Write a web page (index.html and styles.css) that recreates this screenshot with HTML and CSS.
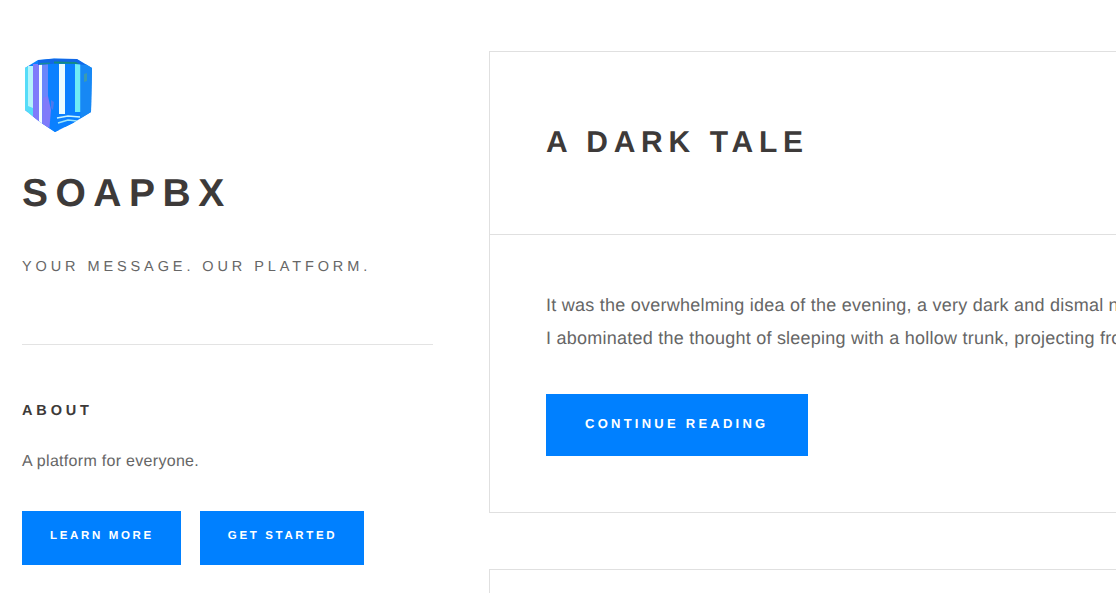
FILE: index.html
```html
<!DOCTYPE html>
<html>
<head>
    <title>Soapbx</title>
    <link rel="stylesheet" href="styles.css">
</head>
<body>
    <div class="page">
        <aside class="sidebar">
            <svg class="logo" width="68" height="75" viewBox="0 0 68 75">
                <defs>
                    <clipPath id="cube">
                        <path d="M1 10 L14 2 L30 .5 L53 1 L68 10 L67 54 L49 65 L31 74 L16 64 L1 52 Z"/>
                    </clipPath>
                </defs>
                <g clip-path="url(#cube)">
                    <rect width="68" height="75" fill="#0a80ff"/>
                    <rect x="0" y="8" width="4" height="67" fill="#55dcf8"/>
                    <rect x="4" y="8" width="5" height="67" fill="#b5f4fb"/>
                    <rect x="9" y="6" width="6" height="69" fill="#7f7bfa"/>
                    <rect x="15" y="6" width="3" height="62" fill="#f2fdff"/>
                    <rect x="18" y="5" width="6" height="70" fill="#6a86fb"/>
                    <rect x="24" y="5" width="11" height="70" fill="#0a80ff"/>
                    <rect x="35" y="6" width="6" height="50" fill="#eafcff"/>
                    <rect x="41" y="6" width="10" height="69" fill="#0a80ff"/>
                    <rect x="51" y="6" width="5.5" height="48" fill="#6fecf6"/>
                    <rect x="56.5" y="6" width="11.5" height="69" fill="#1788f4"/>
                    <path d="M14 2 L30 .5 L53 1 L62 7 L40 5 L14 7 Z" fill="#1268e6"/>
                    <path d="M16 5 L26 4.5 L26 6 L16 6.5 Z" fill="#178a9a"/>
                    <path d="M30 3.5 L52 4 L55 6 L30 5.5 Z" fill="#128c84"/>
                    <path d="M60 16 L63 15 L63 23 L60 24 Z" fill="#3a9ab0"/>
                    <path d="M19 40 L24 38 L27 52 L25 75 L18 75 Z" fill="#7f7bfa"/>
                    <path d="M27 42 L30 44 L29 52 L27 50 Z" fill="#4a78f0"/>
                    <path d="M33 60 L44 58 L56 59" fill="none" stroke="#c8f4fc" stroke-width="1.5"/>
                    <path d="M34 65 L44 62 L53 63" fill="none" stroke="#9ce6fb" stroke-width="1.5"/>
                    <path d="M9 56 L15 56 L15 66 L9 62 Z" fill="#7f7bfa"/>
                    <path d="M4 48 L9 50 L9 62 L4 56 Z" fill="#55dcf8"/>
                </g>
            </svg>
            <h1 class="site-title">SOAPBX</h1>
            <p class="tagline">YOUR MESSAGE. OUR PLATFORM.</p>
            <hr class="rule">
            <h4 class="about-title">ABOUT</h4>
            <p class="about-text">A platform for everyone.</p>
            <div class="actions">
                <a class="button small">LEARN MORE</a>
                <a class="button small">GET STARTED</a>
            </div>
        </aside>
        <main class="posts">
            <article class="post">
                <header class="post-head">
                    <h2 class="post-title">A DARK TALE</h2>
                </header>
                <div class="post-body">
                    <p>It was the overwhelming idea of the evening, a very dark and dismal night, and the wind was rising over the hills.<br>I abominated the thought of sleeping with a hollow trunk, projecting from the wall above my narrow bed.</p>
                    <a class="button">CONTINUE READING</a>
                </div>
            </article>
            <article class="post post-next"></article>
        </main>
    </div>
</body>
</html>
```

FILE: styles.css
```css
html, body {
    margin: 0;
    height: 593px;
    overflow: hidden;
    background-color: #fff;
}
body {
    font-family: "Liberation Sans", Arial, sans-serif;
    color: #666;
    text-rendering: geometricPrecision;
}
.page {
    display: flex;
    width: 1400px;
}
.sidebar {
    width: 411px;
    margin-left: 22px;
    padding-top: 58px;
    flex-shrink: 0;
}
.logo {
    display: block;
    margin-left: 2px;
}
.site-title {
    margin: 40px 0 0;
    font-size: 39px;
    line-height: 42px;
    letter-spacing: 7.5px;
    font-weight: 700;
    color: #3d3a39;
}
.tagline {
    margin: 42px 0 0;
    font-size: 14.5px;
    line-height: 20px;
    letter-spacing: 3.9px;
}
.rule {
    margin: 67px 0 0;
    border: none;
    border-top: 1px solid #e3e3e3;
}
.about-title {
    margin: 57px 0 0;
    font-size: 14.5px;
    line-height: 18px;
    letter-spacing: 3.85px;
    font-weight: 700;
    color: #3d3a39;
}
.about-text {
    margin: 32px 0 0;
    font-size: 16px;
    line-height: 20px;
    letter-spacing: .3px;
}
.actions {
    display: flex;
    gap: 19px;
    margin-top: 39px;
}
.button {
    display: inline-block;
    padding: 0 40px 0 39px;
    height: 62px;
    line-height: 59px;
    background-color: #0080ff;
    color: #fff;
    font-size: 13px;
    font-weight: 700;
    letter-spacing: 3.25px;
}
.button.small {
    padding: 0 27px 0 28px;
    height: 54px;
    line-height: 50px;
    font-size: 11.5px;
    letter-spacing: 2.65px;
}
.posts {
    margin-left: 56px;
    padding-top: 51px;
    width: 900px;
    flex-shrink: 0;
}
.post {
    border: 1px solid #e0e0e0;
    margin-bottom: 56px;
}
.post-next {
    height: 300px;
}
.post-head {
    height: 182px;
    padding: 0 56px;
    border-bottom: 1px solid #e0e0e0;
    display: flex;
    align-items: center;
}
.post-title {
    margin: 0;
    font-size: 30px;
    letter-spacing: 5.7px;
    font-weight: 700;
    color: #3d3a39;
}
.post-body {
    padding: 54px 56px 56px;
}
.post-body p {
    margin: 0 0 39px;
    font-size: 18px;
    line-height: 33px;
    letter-spacing: .24px;
    white-space: nowrap;
}
.post-body .button {
    vertical-align: top;
}
```
